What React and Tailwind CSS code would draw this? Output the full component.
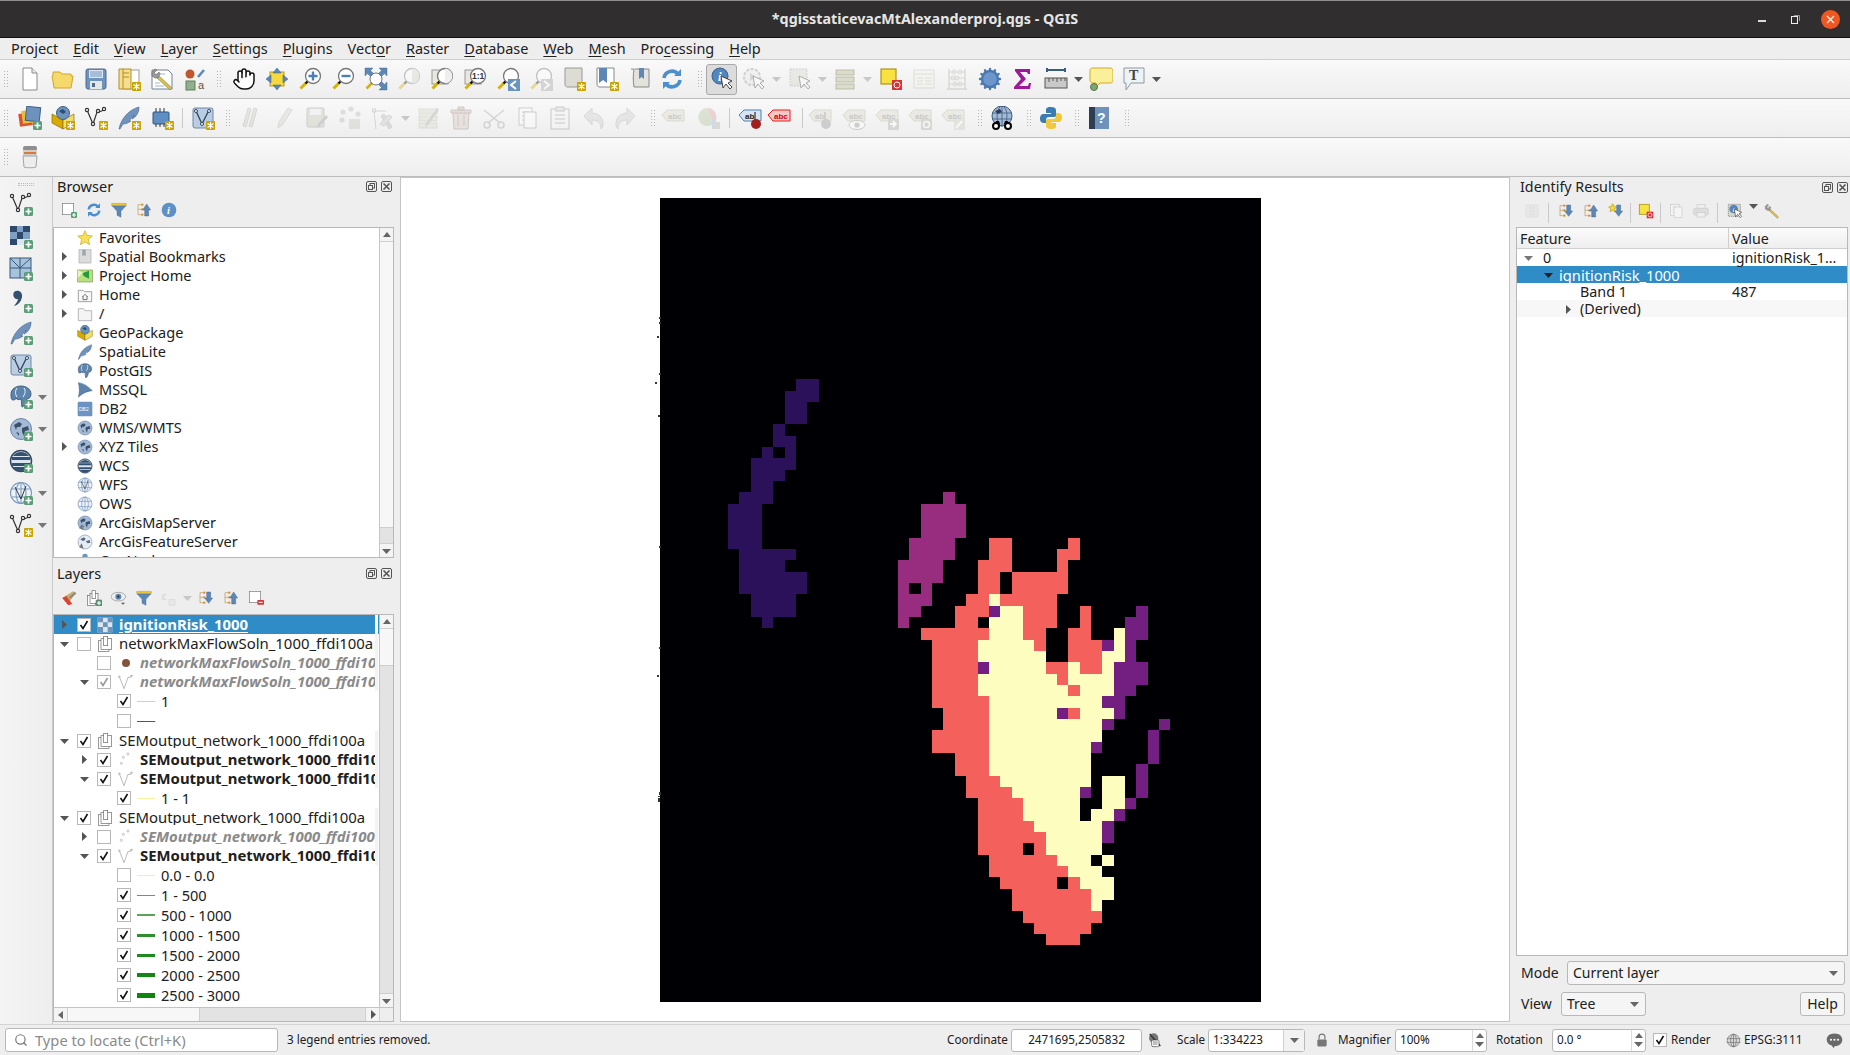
import React from 'react';
import { Hand, Search, Cog } from 'lucide-react';

// ---- small shared icon parts ----
const Star = (
  <g>
    <rect x="15" y="15" width="9" height="9" rx="1" fill="#c9a300" />
    <path d="M19.5 16v7M16.5 17.5l6 4M22.5 17.5l-6 4" stroke="#fff" strokeWidth="1.2" />
  </g>
);
const PlusB = (
  <g>
    <rect x="15" y="15" width="9" height="9" rx="1.5" fill="#5a9e78" />
    <path d="M19.5 16.5v6M16.5 19.5h6" stroke="#fff" strokeWidth="1.7" />
  </g>
);
const Vee = (
  <g fill="none" stroke="#333" strokeWidth="1.2">
    <path d="M3 4l6 14 4-12 2 0 5-2" />
    <circle cx="3" cy="4" r="1.6" fill="#fff" />
    <circle cx="9" cy="18" r="1.6" fill="#fff" />
    <circle cx="14" cy="5" r="1.6" fill="#fff" />
    <circle cx="20" cy="3" r="1.6" fill="#fff" />
  </g>
);
const VeeBox = (
  <g>
    <rect x="2" y="2" width="20" height="20" rx="2" fill="#b9cde3" stroke="#6d88a8" />
    <path d="M5 5l6 13 7-14" fill="none" stroke="#34495f" strokeWidth="1.4" />
    <circle cx="5" cy="5" r="1.5" fill="#fff" stroke="#34495f" />
    <circle cx="18" cy="5" r="1.5" fill="#fff" stroke="#34495f" />
    <circle cx="11" cy="18" r="1.5" fill="#fff" stroke="#34495f" />
  </g>
);
const Feather = (
  <path d="M2 23C4 13 11 4 22 1c0 6-3 10-7 12l2-4-5 6 2 0c-3 2-5 3-8 3l-3 5z" fill="#6f93bd" stroke="#44638a" strokeWidth=".6" />
);
const Globe = (
  <g>
    <circle cx="12" cy="12" r="10.5" fill="#a3bad6" stroke="#6c86a8" />
    <path d="M5 8l5-3 3 2-2 3-3 0-1 3zM13 11l6-2 1 4-4 1-1 5-2-4zM7 15l3 1 0 3z" fill="#3d4f66" />
  </g>
);
const GlobeDark = (
  <g>
    <circle cx="12" cy="12" r="10.5" fill="#dbe6f2" stroke="#34495f" strokeWidth="1.5" />
    <path d="M3 8h18v3H3zM3 14h18v3H3z" fill="#34516f" />
    <path d="M4 7a10 10 0 0 1 16 0zM4 18a10 10 0 0 0 16 0z" fill="#34516f" />
  </g>
);
const GlobeLine = (
  <g fill="none" stroke="#7c9abd" strokeWidth="1.1">
    <circle cx="12" cy="12" r="10.5" fill="#eef3f9" />
    <ellipse cx="12" cy="12" rx="5" ry="10.5" />
    <path d="M2 8h20M2 16h20M12 2v20" />
  </g>
);
const Pg = (
  <g>
    <path d="M2 9C2 4 7 1 12 1s10 3 10 8c0 3-2 5-4 5-1 0-1 3-2 5s-2 3-3 3c-1-2 0-5-1-8-2 1-4 1-5-1 0 1-1 2-3 2S2 12 2 9z" fill="#5d84ad" stroke="#2e4d70" strokeWidth=".8" />
    <path d="M8 3c-2 3-2 6 0 9M15 3c2 3 1 6-1 9" fill="none" stroke="#fff" strokeWidth=".9" />
  </g>
);
const mag = (inner) => (
  <g>
    <path d="M8 16L2.5 21.5" stroke="#d9b100" strokeWidth="3" />
    <path d="M10 14l-2.5 2.5" stroke="#111" strokeWidth="2.4" />
    <circle cx="15" cy="9" r="7.5" fill="#fff" stroke="#777" strokeWidth="1.3" />
    {inner}
  </g>
);
const tag = (stroke, fill, color, text) => (
  <g>
    <path d="M1 9l5-5h17v11H6z" fill={fill} stroke={stroke} />
    <text x="7" y="13" fontSize="8" fontWeight="700" fill={color} fontFamily="Liberation Sans, sans-serif">{text}</text>
  </g>
);
const Beige = (
  <g fill="#dcdccb" stroke="#b4b49c" strokeWidth=".8">
    <rect x="3" y="3" width="18" height="5" />
    <rect x="3" y="10" width="18" height="5" />
    <rect x="3" y="17" width="18" height="5" />
  </g>
);
const Cursor = <path d="M11 9l2 12 3-4 4 5 2-2-4-4 4-2z" fill="#fff" stroke="#333" strokeWidth=".9" />;
const BlueDown = <path d="M13 3h6v9h3l-6 8-6-8h3z" fill="#5d87b5" stroke="#3e6288" strokeWidth=".6" />;
const BlueUp = <path d="M13 21h6v-9h3l-6-9-6 9h3z" fill="#5d87b5" stroke="#3e6288" strokeWidth=".6" />;
const Tree = (
  <g fill="none" stroke="#b59a5a">
    <path d="M3 4h6M3 4v15M3 11h6M3 19h6" />
    <rect x="8" y="2.5" width="3" height="3" fill="#e08a2e" stroke="none" />
    <rect x="8" y="9.5" width="3" height="3" fill="#e08a2e" stroke="none" />
    <rect x="8" y="17.5" width="3" height="3" fill="#e08a2e" stroke="none" />
  </g>
);
const Table3 = (
  <g fill="none" stroke="#8a8a8a" strokeWidth=".9">
    <rect x="4" y="2" width="13" height="17" fill="#fff" />
    <path d="M7 6h7M7 10h7M7 14h7" />
    <rect x="9" y="6" width="12" height="16" fill="#fff" />
  </g>
);
const Wrench = (
  <g>
    <path d="M8 8l14 13-2 2L6 10z" fill="#d9bf55" stroke="#8a7a30" strokeWidth=".6" />
    <path d="M2 5l3-3 2 1-3 3 2 2 3-3 1 2-2 4-3 0-3-2z" fill="#9a9a9a" stroke="#666" strokeWidth=".6" />
  </g>
);

// ---- icon set ----
const G = {
  doc: <g><path d="M5 1h9l5 5v17H5z" fill="#fff" stroke="#8a8a8a" /><path d="M14 1v5h5" fill="#eee" stroke="#8a8a8a" /></g>,
  folder: <path d="M2 5h7l2 2h9v2h2l-2 12H3L1 9h1z" fill="#f6d96b" stroke="#cfa62a" />,
  save: <g><rect x="2" y="2" width="20" height="20" rx="2" fill="#6d93bd" stroke="#4a6d93" /><rect x="5" y="3" width="14" height="8" fill="#dfe7f0" /><path d="M6 5h12M6 7h12M6 9h12" stroke="#6d93bd" /><rect x="6" y="14" width="12" height="8" fill="#e6e6e6" /><rect x="8" y="16" width="3" height="4" fill="#4a6d93" /></g>,
  template: <g><rect x="8" y="3" width="14" height="19" fill="#fff" stroke="#999" /><path d="M2 2h12v20H2z" fill="#f5de8c" stroke="#b18f2a" /><path d="M6 2v20M6 6h6M6 10h6" stroke="#b18f2a" fill="none" />{Star}</g>,
  props: <g><path d="M2 3h16l4 4v15H2z" fill="#fff" stroke="#6f8096" /><path d="M5 7h10M5 16h5M5 19h9" stroke="#9fb6d2" />{Wrench}</g>,
  style: <g><circle cx="7" cy="7" r="4.5" fill="#c0562f" /><path d="M15 10L21 3" stroke="#5b8ab8" strokeWidth="2.6" /><rect x="3" y="14" width="9" height="9" fill="#8fb08a" stroke="#5f7f5f" /><text x="15" y="22" fontSize="11" fill="#555" fontFamily="Liberation Sans, sans-serif">a</text></g>,
  panto: <g><rect x="5" y="5" width="14" height="14" fill="#f5d93d" stroke="#b59a20" /><path d="M12 1l4 5h-8zM12 23l4-5h-8zM1 12l5-4v8zM23 12l-5-4v8z" fill="#5d87b5" stroke="#3e6288" strokeWidth=".5" /></g>,
  zoomin: mag(<path d="M15 4.5v9M10.5 9h9" stroke="#4a80b5" strokeWidth="2.4" />),
  zoomout: mag(<path d="M10.5 9h9" stroke="#4a80b5" strokeWidth="2.4" />),
  zoomfull: <g><path d="M10 14L2.5 21.5" stroke="#d9b100" strokeWidth="2.6" /><path d="M10 14l-2.5 2.5" stroke="#111" strokeWidth="2.4" /><circle cx="12" cy="12" r="6" fill="#fff" stroke="#777" /><path d="M1 1h8l-2.5 2.5 3 3-3 3-3-3L1 9zM23 1h-8l2.5 2.5-3 3 3 3 3-3L23 9zM23 23h-8l2.5-2.5-3-3 3-3 3 3 2.5-2.5z" fill="#5d87b5" stroke="#3e6288" strokeWidth=".4" /></g>,
  zoomlayer: mag(<path d="M15 1.5a7.5 7.5 0 0 1 0 15z" fill="#d8d8cc" />),
  zoomsel: <g><rect x="2" y="3" width="16" height="14" fill="#e8e8de" stroke="#999" />{mag(<path d="M15 1.5a7.5 7.5 0 0 1 0 15z" fill="#eee" />)}</g>,
  zoom11: <g><rect x="2" y="3" width="16" height="14" fill="#e8e8de" stroke="#999" />{mag(<text x="9" y="12" fontSize="8.5" fontWeight="700" fill="#333" fontFamily="Liberation Sans, sans-serif">1:1</text>)}</g>,
  zoomlast: <g>{mag(null)}<rect x="12" y="12" width="12" height="12" fill="#6a94c0" /><path d="M20 14l-5 4 5 4" stroke="#fff" strokeWidth="2" fill="none" /></g>,
  zoomnext: <g>{mag(null)}<rect x="12" y="12" width="12" height="12" fill="#a8a8a8" /><path d="M15 14l5 4-5 4" stroke="#fff" strokeWidth="2" fill="none" /></g>,
  booknew: <g><path d="M3 1h17v19H6c-2 0-3-1-3-3z" fill="#dcdcd4" stroke="#999" />{Star}</g>,
  bookstar: <g><path d="M2 1h17v19H5c-2 0-3-1-3-3z" fill="#fff" stroke="#888" /><path d="M4 1h8v15l-4-3-4 3z" fill="#5d87b5" />{Star}</g>,
  book: <g><path d="M2 2h3c-1 6-1 12 0 18h15V2H6" fill="#e3e3dc" stroke="#888" /><path d="M10 1h5v11l-2.5-2L10 12z" fill="#5d87b5" /></g>,
  refresh: <g fill="none" stroke="#4a8fd0" strokeWidth="3.6"><path d="M4 11a8 8 0 0 1 14-4" /><path d="M20 13a8 8 0 0 1-14 4" /><path d="M21 2v7h-7z" fill="#4a8fd0" stroke="none" /><path d="M3 22v-7h7z" fill="#4a8fd0" stroke="none" /></g>,
  identify: <g><circle cx="10" cy="9" r="8" fill="#5486be" stroke="#3e6288" /><text x="8" y="14" fontSize="13" fontWeight="700" fontStyle="italic" fill="#fff" fontFamily="Liberation Serif, serif">i</text>{Cursor}</g>,
  idselect: <g><rect x="2" y="2" width="18" height="18" fill="#d8d8cc" stroke="#777" strokeDasharray="2 1" /><circle cx="10" cy="9" r="6.5" fill="#5486be" /><text x="8.5" y="13" fontSize="10" fontWeight="700" fontStyle="italic" fill="#fff" fontFamily="Liberation Serif, serif">i</text>{Cursor}</g>,
  action: <g><circle cx="10" cy="10" r="8" fill="#e8e8e8" stroke="#999" strokeWidth="2" strokeDasharray="3 1.5" /><path d="M8 6l6 4-6 4z" fill="#aaa" />{Cursor}</g>,
  select: <g><rect x="2" y="2" width="17" height="17" fill="#d8d8cc" stroke="#999" strokeDasharray="2 1" />{Cursor}</g>,
  bars: Beige,
  panelbars: <g fill="#e4e4e4" stroke="#bbb"><rect x="3" y="3" width="18" height="18" rx="2" /><path d="M3 12h18" /><rect x="8" y="6" width="8" height="3" /><rect x="8" y="15" width="8" height="3" /></g>,
  deselect: <g><rect x="2" y="2" width="15" height="15" fill="#f7e23f" stroke="#ae9320" strokeWidth="1.2" /><rect x="13" y="13" width="10" height="10" fill="#d9333a" /><circle cx="18" cy="18" r="3" fill="none" stroke="#fff" /></g>,
  attrtable: <g><rect x="2" y="3" width="20" height="18" fill="#f3f3ed" stroke="#bcbcb0" /><path d="M2 7h20M5 11h6M13 11h7M5 14h6M13 14h7M5 17h6M13 17h7" stroke="#bcbcb0" /></g>,
  abacus: <g fill="none" stroke="#b0b0a4"><path d="M4 2v19M20 2v19M2 22h20" strokeWidth="1.4" /><path d="M4 5h16M4 11h16M4 17h16" /><circle cx="9" cy="5" r="2" /><circle cx="15" cy="5" r="2" /><circle cx="8" cy="11" r="2" /><circle cx="12" cy="11" r="2" /><circle cx="10" cy="17" r="2" /><circle cx="15" cy="17" r="2" /></g>,
  sigma: <path d="M4 2h15v5h-2l-1-2H9l6 7-7 7h9l1-3h2l-1 6H3v-2l7-8-6-8z" fill="#a0189a" />,
  ruler: <g><path d="M3 3h18M3 1v4M21 1v4" stroke="#3a5d84" strokeWidth="2" /><rect x="1" y="11" width="22" height="10" fill="#c9c9c9" stroke="#555" /><path d="M5 11v4M9 11v3M13 11v4M17 11v3M21 11v3" stroke="#555" /></g>,
  bubble: <g><path d="M3 1h18c2 0 3 1 3 3v9c0 2-1 3-3 3H11l-3 3-1-3H4c-2 0-3-1-3-3V3c0-1 1-2 2-2z" fill="#fbf09a" stroke="#d2a92a" /><circle cx="5" cy="20" r="3.5" fill="#7fa66f" stroke="#54764a" /></g>,
  textbox: <g><path d="M2 1h20v15H9l-5 7v-7H2z" fill="#eef3f5" stroke="#8c9aa0" /><text x="7" y="13" fontSize="14" fontWeight="700" fill="#444" fontFamily="Liberation Serif, serif">T</text></g>,
  layers: <g><rect x="1" y="7" width="13" height="13" fill="#d6552f" transform="rotate(-8 7 13)" /><rect x="4" y="4" width="13" height="13" fill="#e8bd3c" transform="rotate(-8 10 10)" /><rect x="8" y="1" width="14" height="14" fill="#6d93bd" stroke="#3e6288" transform="rotate(6 15 8)" />{PlusB}</g>,
  geopkg: <g><path d="M1 8l11 6v9L1 17z" fill="#d9a900" stroke="#8a6d10" strokeWidth=".7" /><path d="M23 8l-11 6v9l11-6z" fill="#f3dc68" stroke="#8a6d10" strokeWidth=".7" /><circle cx="12" cy="7" r="6.5" fill="#6d93bd" stroke="#3e6288" /><path d="M8 5l4-2 3 3-3 2z" fill="#2e4d70" /></g>,
  geopkgS: <g><path d="M1 8l11 6v9L1 17z" fill="#d9a900" stroke="#8a6d10" strokeWidth=".7" /><path d="M23 8l-11 6v9l11-6z" fill="#f3dc68" stroke="#8a6d10" strokeWidth=".7" /><circle cx="12" cy="7" r="6.5" fill="#6d93bd" stroke="#3e6288" /><path d="M8 5l4-2 3 3-3 2z" fill="#2e4d70" />{Star}</g>,
  vstar: <g>{Vee}{Star}</g>,
  vplus: <g>{Vee}{PlusB}</g>,
  fstar: <g>{Feather}{Star}</g>,
  fplus: <g>{Feather}{PlusB}</g>,
  chip: <g><rect x="3" y="6" width="16" height="12" rx="1" fill="#5f8fc2" stroke="#2f557f" /><path d="M6 2v4M10 2v4M14 2v4M6 18v3M10 18v3M14 18v3" stroke="#333" />{Star}</g>,
  vboxstar: <g>{VeeBox}{Star}</g>,
  vboxplus: <g>{VeeBox}{PlusB}</g>,
  pencils: <g fill="#cfcfc3" stroke="#999" strokeWidth=".7"><path d="M2 20l5-18 3 1-5 18zM8 20l5-18 3 1-5 18z" /></g>,
  pencil: <path d="M6 22l1-6L16 2l4 2-9 14z" fill="#d6d6ca" stroke="#999" strokeWidth=".7" />,
  savepen: <g><rect x="2" y="2" width="17" height="19" rx="1" fill="#c9c9bb" stroke="#999" /><rect x="5" y="3" width="11" height="6" fill="#eee" /><path d="M12 22l1-4 8-9 2 2-8 9z" fill="#999" /></g>,
  points: <g fill="#bbb"><circle cx="5" cy="6" r="2.6" /><circle cx="13" cy="3" r="2.6" /><circle cx="20" cy="8" r="2.6" /><circle cx="4" cy="14" r="2.6" /><rect x="11" y="13" width="11" height="10" fill="#c9c9bb" /></g>,
  digit: <g fill="none" stroke="#aaa"><path d="M3 5l2 18M3 5h12" /><rect x="1.5" y="3" width="3" height="3" /><path d="M13 8l8 13-3 2-8-13z" fill="#bbb" /><path d="M9 18l8-9 4 2-8 9z" fill="#ccc" /></g>,
  tablepen: <g>{Beige}<path d="M9 22l1-5L21 2l2 2-11 15z" fill="#aaa" /></g>,
  trash: <g><path d="M4 7h16l-1 16H5z" fill="#d9c9c0" stroke="#9a8a82" /><path d="M2 4h20v3H2zM9 1h6v3H9z" fill="#c9b9b0" stroke="#9a8a82" /><path d="M9 9v11M15 9v11" stroke="#9a8a82" /></g>,
  scissors: <g fill="none" stroke="#a8a8a8" strokeWidth="1.6"><path d="M2 4l16 13M22 4L6 17" /><circle cx="5" cy="19" r="3" /><circle cx="19" cy="19" r="3" /></g>,
  copy: Table3,
  paste: <g fill="none" stroke="#8a8a8a"><rect x="3" y="3" width="18" height="20" fill="#f4f4f4" /><rect x="8" y="1" width="8" height="4" fill="#ddd" /><path d="M7 9h10M7 13h10M7 17h10" /></g>,
  printer: <g fill="#c4c4c4" stroke="#999"><rect x="6" y="2" width="12" height="7" fill="#eee" /><rect x="1" y="8" width="22" height="10" rx="2" /><rect x="6" y="14" width="12" height="7" fill="#eee" /></g>,
  undo: <path d="M3 10l8-8v5c6 0 11 4 11 11 0 2-1 4-2 5 0-6-3-9-9-9v5z" fill="#cfcfcf" stroke="#b0b0b0" />,
  redo: <path d="M21 10l-8-8v5C7 7 2 11 2 18c0 2 1 4 2 5 0-6 3-9 9-9v5z" fill="#cfcfcf" stroke="#b0b0b0" />,
  abc: tag('#b4b49c', '#dcdccb', '#888', 'abc'),
  diagram: <g><path d="M10 2a9 9 0 1 0 6 16z" fill="#b6c7a2" /><path d="M10 2a9 9 0 0 1 6 16z" fill="#d8a59c" /><rect x="15" y="13" width="4" height="10" fill="#9fb6d2" /><rect x="19" y="16" width="4" height="7" fill="#b8b8a8" /></g>,
  abpin: <g>{tag('#4a80b5', '#d6e4f3', '#222', 'ab')}<path d="M17 6v10" stroke="#777" strokeWidth="2" /><circle cx="18" cy="18" r="5" fill="#a32020" /></g>,
  abcred: tag('#e81c1c', '#f5c8c8', '#d40000', 'abc'),
  abcpin: <g>{tag('#b4b49c', '#dcdccb', '#888', 'ab')}<path d="M17 6v10" stroke="#999" strokeWidth="2" /><circle cx="18" cy="18" r="5" fill="#999" /></g>,
  abceye: <g>{tag('#b4b49c', '#dcdccb', '#888', 'abc')}<ellipse cx="15" cy="19" rx="8" ry="4.5" fill="#fff" stroke="#999" /><circle cx="15" cy="19" r="2.6" fill="#999" /></g>,
  abcmove: <g>{tag('#b4b49c', '#dcdccb', '#888', 'abc')}<rect x="13" y="13" width="11" height="11" rx="1" fill="#b0b0a4" /><path d="M15 18h5M18 15l3 3-3 3" stroke="#fff" strokeWidth="1.8" fill="none" /></g>,
  abcrot: <g>{tag('#b4b49c', '#dcdccb', '#888', 'abc')}<rect x="13" y="13" width="11" height="11" rx="1" fill="#b0b0a4" /><circle cx="18.5" cy="18.5" r="3" fill="none" stroke="#fff" strokeWidth="1.6" /></g>,
  abcpen: <g>{tag('#b4b49c', '#dcdccb', '#888', 'abc')}<rect x="13" y="13" width="11" height="11" rx="1" fill="#cfcfc0" /><path d="M15 22l6-7" stroke="#fff" strokeWidth="2" /></g>,
  binoc: <g><circle cx="12" cy="10" r="10" fill="#a3bad6" stroke="#3d5a7d" /><path d="M2 7h20M2 13h20M12 0v20" stroke="#3d5a7d" fill="none" strokeWidth=".8" /><ellipse cx="12" cy="10" rx="5" ry="10" fill="none" stroke="#3d5a7d" strokeWidth=".8" /><path d="M5 5l5-2 2 3-4 2z" fill="#2d3e52" /><circle cx="6" cy="20" r="3" fill="#fff" stroke="#000" strokeWidth="2" /><circle cx="18" cy="20" r="3" fill="#fff" stroke="#000" strokeWidth="2" /><path d="M6 15h3l1 3h4l1-3h3l1 3H5z" fill="#000" /></g>,
  python: <g><path d="M12 1c-5 0-5 2-5 3v3h5v1H5c-3 0-4 2-4 5s2 4 4 4h2v-3c0-2 1-3 3-3h5c2 0 2-1 2-2V4c0-2-2-3-5-3z" fill="#3d7ab0" /><path d="M12 23c5 0 5-2 5-3v-3h-5v-1h7c3 0 4-2 4-5s-2-4-4-4h-2v3c0 2-1 3-3 3h-5c-2 0-2 1-2 2v5c0 2 2 3 5 3z" fill="#f2c83b" /></g>,
  help: <g><rect x="2" y="1" width="20" height="22" fill="#6d93bd" /><rect x="2" y="1" width="6" height="22" fill="#2d3e52" /><text x="10" y="17" fontSize="14" fontWeight="700" fill="#fff" fontFamily="Liberation Sans, sans-serif">?</text></g>,
  filter: <g><rect x="5" y="1" width="14" height="5" rx="2" fill="#8e8e8e" /><rect x="5" y="5" width="14" height="6" fill="#cfcfcf" /><rect x="6" y="7" width="12" height="2" fill="#d97a3a" /><path d="M5 11h14l-1 11c-2 1-10 1-12 0z" fill="#ededed" stroke="#a5a5a5" /></g>,
  rasterplus: <g><path d="M1 1h20v19H1z" fill="#dde5ee" /><path d="M1 1h7v6H1zM14 1h7v6h-7zM8 7h6v7H8zM1 14h7v6H1z" fill="#2e4a6b" /><path d="M8 1h6v6H8zM1 7h7v7H1zM14 7h7v7h-7z" fill="#7fa0c4" />{PlusB}</g>,
  meshplus: <g><rect x="1" y="1" width="21" height="20" fill="#a9c2dc" stroke="#36597f" /><path d="M11 1v20M1 11h21M1 1l10 10M22 1L11 11" stroke="#36597f" fill="none" />{PlusB}</g>,
  commaplus: <g><path d="M5 3c4-3 9 0 8 5-1 5-4 8-8 9 2-3 4-5 4-7-3 1-6-3-4-7z" fill="#34516f" />{PlusB}</g>,
  pgplus: <g>{Pg}{PlusB}</g>,
  wmsplus: <g>{Globe}{PlusB}</g>,
  wcsplus: <g>{GlobeDark}{PlusB}</g>,
  wfsplus: <g>{GlobeLine}<path d="M6 6l6 12 5-13" stroke="#333" fill="none" />{PlusB}</g>,
  newgeo: <g><rect x="2" y="2" width="17" height="17" fill="#fff" stroke="#777" />{PlusB}</g>,
  info: <g><circle cx="12" cy="12" r="11" fill="#5f90c4" /><text x="9" y="18" fontSize="16" fontStyle="italic" fontWeight="700" fill="#fff" fontFamily="Liberation Serif, serif">i</text></g>,
  funnelB: <g><path d="M1 2h22v4H1z" fill="#e8c534" stroke="#a08a20" strokeWidth=".5" /><path d="M2 6h20l-7 8v9l-6-3v-6z" fill="#5d87b5" stroke="#3e6288" strokeWidth=".5" /></g>,
  collapse: <g>{Tree}{BlueUp}</g>,
  expand: <g>{Tree}{BlueDown}</g>,
  expandstar: <g><path d="M7 1l2 4 4 1-3 3 1 4-4-2-4 2 1-4-3-3 4-1z" fill="#f3d83a" stroke="#b59a20" />{BlueDown}</g>,
  wrench: Wrench,
  brush: <g><path d="M2 12l8 10 12-18-4-2z" fill="#c9b067" /><path d="M2 12l6-3 9 12-6 2z" fill="#d9433a" /><path d="M22 4l-9 8" stroke="#888" strokeWidth="3" /></g>,
  addgroup: <g fill="#fff" stroke="#666"><rect x="2" y="8" width="12" height="15" /><rect x="6" y="5" width="12" height="15" /><rect x="9" y="1" width="5" height="12" />{PlusB}</g>,
  eye: <g><ellipse cx="11" cy="10" rx="11" ry="6.5" fill="#eee" stroke="#888" /><circle cx="11" cy="10" r="4.5" fill="#5f86b0" /><circle cx="11" cy="10" r="1.6" fill="#1e2f44" /><path d="M15 19l6 0-3 3z" fill="#555" /></g>,
  epsi: <g><text x="1" y="15" fontSize="16" fill="#aaa" fontFamily="Liberation Sans, sans-serif">ε</text><rect x="12" y="14" width="9" height="9" fill="#ddd" stroke="#bbb" /></g>,
  removeX: <g><rect x="2" y="2" width="17" height="17" fill="#fff" stroke="#777" /><rect x="14" y="15" width="10" height="7" rx="1" fill="#d9333a" /><path d="M16 18.5h6" stroke="#fff" strokeWidth="1.6" /></g>,
  // tree icons
  star: <path d="M12 1l3 7 8 1-6 5 2 8-7-4-7 4 2-8-6-5 8-1z" fill="#f6e05a" stroke="#c9a520" />,
  bookmarks: <g><path d="M3 1h18v20H3z" fill="#dcdcdc" stroke="#aaa" /><path d="M8 1h5v10l-2.5-2L8 11z" fill="#9aa4ae" /></g>,
  projhome: <g><rect x="1" y="3" width="22" height="18" fill="#b9df7f" stroke="#7e9a50" /><path d="M8 8l10-4v12l-8-4z" fill="#1f9c3c" /><path d="M1 3l8 4-8 8z" fill="#e9f4c8" /></g>,
  home: <g><path d="M2 5h7l2 2h11v15H2z" fill="#f7f7f7" stroke="#777" /><path d="M8 15l4-4 4 4M9 14v5h6v-5" fill="none" stroke="#333" /></g>,
  root: <path d="M2 4h8l2 3h10v15H2z" fill="#f4f4f4" stroke="#9a9a9a" />,
  spatialite: Feather,
  pg: Pg,
  mssql: <path d="M2 1c8 1 14 5 21 12-7 1-14 3-21 10 2-7 2-15 0-22z" fill="#5d84ad" stroke="#2e4d70" strokeWidth=".6" />,
  db2: <g><rect x="1" y="1" width="22" height="22" rx="2" fill="#6d93c2" /><text x="3" y="15" fontSize="7.5" fill="#fff" fontFamily="Liberation Sans, sans-serif">DB2</text></g>,
  wms: Globe,
  wcs: GlobeDark,
  wfs: <g>{GlobeLine}<path d="M6 6l6 12 5-13" stroke="#444" fill="none" /></g>,
  ows: GlobeLine,
  arcgis: <g>{Globe}<path d="M3 20l4-6 3 8z" fill="#777" /></g>,
  arcgisf: <g><circle cx="12" cy="12" r="10.5" fill="#e6ecf3" stroke="#7c9abd" /><path d="M5 8l5-3 3 2-2 3-3 0zM13 11l6-2 1 4-4 1z" fill="#5a6a7d" /><path d="M3 20l4-6 3 8z" fill="#777" /></g>,
  geonode: <g><circle cx="12" cy="5" r="4" fill="#6d93bd" /><circle cx="5" cy="14" r="4" fill="#6d93bd" /><circle cx="19" cy="14" r="4" fill="#6d93bd" /></g>,
  raster: <g><path d="M1 1h22v22H1z" fill="#dde5ee" /><path d="M1 1h8v7H1zM16 1h7v7h-7zM9 8h7v7H9zM1 15h8v8H1zM16 15h7v8h-7z" fill="#6d93bd" /></g>,
  group: <g fill="#fff" stroke="#666"><rect x="2" y="7" width="16" height="16" /><rect x="6" y="4" width="16" height="16" /><rect x="10" y="0.5" width="6" height="14" /></g>,
  dot: <circle cx="12" cy="12" r="6" fill="#84543a" />,
  vee: <g fill="none" stroke="#999" strokeWidth="1"><path d="M2 4l7 18 6-17 4 0 3-3" /><circle cx="2" cy="4" r="1.2" fill="#fff" /><circle cx="20" cy="3" r="1.2" fill="#fff" /></g>,
  pts: <g fill="#fff" stroke="#aaa"><circle cx="15" cy="3" r="1.6" /><circle cx="8" cy="8" r="1.6" /><circle cx="5" cy="17" r="1.6" /></g>,
  lockcrs: <g><circle cx="10" cy="9" r="7" fill="#777" /><path d="M4 3l16 18" stroke="#333" strokeWidth="2" /><rect x="7" y="12" width="11" height="10" rx="2" fill="#fff" stroke="#444" /><path d="M9 15h7M9 18h7" stroke="#444" /></g>,
  lock: <g><path d="M7 11V7a5 5 0 0 1 10 0v4" fill="none" stroke="#777" strokeWidth="2" /><rect x="4" y="11" width="16" height="12" rx="2" fill="#777" /></g>,
  crs: <g fill="none" stroke="#666"><circle cx="12" cy="12" r="10" fill="#d9d9d9" /><ellipse cx="12" cy="12" rx="4.5" ry="10" /><path d="M1 9h22M1 15h22M12 2v20" /></g>,
  msg: <g><path d="M12 2c7 0 11 4 11 9s-4 9-11 9l-1 3-3-4c-4-1-7-4-7-8 0-5 4-9 11-9z" fill="#6a6a6a" /><circle cx="7" cy="11" r="1.5" fill="#fff" /><circle cx="12" cy="11" r="1.5" fill="#fff" /><circle cx="17" cy="11" r="1.5" fill="#fff" /></g>,
};

const Ico = ({ n, s = 24, off = false }) => {
  const look = off ? 'shrink-0 opacity-40' : 'shrink-0';
  if (n === 'hand') return <Hand size={s} fill="#fff" stroke="#111" strokeWidth={1.5} className={look} />;
  if (n === 'cog') return <Cog size={s} fill="#6d97cc" stroke="#4a78b0" strokeWidth={2.4} className={look} />;
  return <svg width={s} height={s} viewBox="0 0 24 24" className={look}>{G[n]}</svg>;
};

const TriR = () => <svg width="6" height="9" viewBox="0 0 6 9"><path d="M1 0l5 4.5L1 9z" fill="#555" /></svg>;
const TriD = ({ c = '#555' }) => <svg width="9" height="6" viewBox="0 0 9 6"><path d="M0 1h9L4.5 6z" fill={c} /></svg>;

const Grip = () => (
  <svg width="5" height="17" viewBox="0 0 5 17">
    {[1, 4, 7, 10, 13, 16].map((y) => (
      <g key={y} fill="#b5b5b5"><rect x="0" y={y - 1} width="1" height="1" /><rect x="3" y={y - 1} width="1" height="1" /></g>
    ))}
  </svg>
);

const WIDTHS = {
  1: 'w-[1px]', 2: 'w-[2px]', 3: 'w-[3px]', 4: 'w-[4px]', 5: 'w-[5px]', 6: 'w-[6px]', 7: 'w-[7px]', 8: 'w-[8px]', 9: 'w-[9px]',
  12: 'w-[12px]', 13: 'w-[13px]', 14: 'w-[14px]', 16: 'w-[16px]', 20: 'w-[20px]', 24: 'w-[24px]', 25: 'w-[25px]', 26: 'w-[26px]', 28: 'w-[28px]', 30: 'w-[30px]', 31: 'w-[31px]', 33: 'w-[33px]',
};

// items: "name", "name!" (disabled), "name/28" (slot width), ":" grip, "|" separator, "v" menu arrow, "_5" spacer
const Bar = ({ items, size = 24, slot = 33 }) => (
  <>
    {items.map((raw, i) => {
      if (raw.startsWith('_')) return <div key={i} className={`shrink-0 ${WIDTHS[raw.slice(1)]}`} />;
      const [name, w] = raw.split('/');
      const width = WIDTHS[w || (name === ':' ? 16 : name === '|' ? 8 : name === 'v' || name === 'v!' ? 12 : slot)];
      if (name === ':') return <div key={i} className={`shrink-0 flex justify-center ${width}`}><Grip /></div>;
      if (name === '|') return <div key={i} className={`shrink-0 flex justify-center ${width}`}><div className="w-px h-[20px] bg-[#c9c9c9]" /></div>;
      if (name === 'v' || name === 'v!') return <div key={i} className={`shrink-0 flex justify-center ${width}`}><TriD c={name === 'v' ? '#555' : '#c8c8c8'} /></div>;
      const off = name.endsWith('!');
      const n = off ? name.slice(0, -1) : name;
      if (n === 'identify') {
        return (
          <div key={i} className={`shrink-0 flex items-center justify-center h-[31px] bg-[#dcdcdc] border border-[#a9a9a9] rounded-[3px] ${width}`}>
            <Ico n={n} s={size} />
          </div>
        );
      }
      return <div key={i} className={`shrink-0 flex justify-center ${width}`}><Ico n={n} s={size} off={off} /></div>;
    })}
  </>
);

const TB1 = [':/13', 'doc', 'folder', 'save', 'template', 'props', 'style', ':', 'hand', 'panto', 'zoomin', 'zoomout', 'zoomfull', 'zoomlayer!', 'zoomsel', 'zoom11', 'zoomlast', 'zoomnext!', 'booknew', 'bookstar', '_3', 'book/30', 'refresh/31', '_7', ':/12', 'identify/31', 'action!', 'v!', '_1', 'select!', 'v!', 'bars', 'v!', '_1', 'deselect', 'attrtable!', 'abacus!', 'cog', 'sigma', 'ruler', 'v', 'bubble', 'textbox', 'v'];
const TB2 = [':/13', 'layers', 'geopkgS', 'vstar', 'fstar', 'chip', '|', 'vboxstar', '_1', ':', '_3', 'pencils!/28', 'pencil!', 'savepen!', 'points!', 'digit!', 'v!', 'tablepen!', 'trash!', 'scissors!', 'copy!', 'paste!', 'undo!', 'redo!', '_3', ':', 'abc!/24', '_7', 'diagram!', '|', 'abpin', 'abcred/26', '|/20', 'abcpin!/16', '_9', 'abceye!', 'abcmove!', 'abcrot!', 'abcpen!', '_3', ':', 'binoc/28', '_5', ':', 'python/28', '_4', ':', 'help/28', '_6', ':'];

const MENUS = [
  ['Pro', 'j', 'ect'], ['', 'E', 'dit'], ['', 'V', 'iew'], ['', 'L', 'ayer'], ['', 'S', 'ettings'], ['', 'P', 'lugins'],
  ['Vect', 'o', 'r'], ['', 'R', 'aster'], ['', 'D', 'atabase'], ['', 'W', 'eb'], ['', 'M', 'esh'], ['Pro', 'c', 'essing'], ['', 'H', 'elp'],
];

const ToolRow = ({ children }) => (
  <div className="h-[39px] shrink-0 flex items-center border-b border-[#bdbdbd] bg-gradient-to-b from-[#f9f9f9] to-[#eeeeee]">{children}</div>
);

const DockBtns = () => (
  <div className="flex items-center gap-[4px] ml-auto">
    <svg width="11" height="11" viewBox="0 0 11 11" fill="none" stroke="#555"><rect x=".5" y=".5" width="10" height="10" rx="1.5" /><rect x="4" y="2.5" width="4.5" height="4.5" /><rect x="2.5" y="4.5" width="4" height="4" fill="#eee" /></svg>
    <svg width="11" height="11" viewBox="0 0 11 11" fill="none" stroke="#555"><rect x=".5" y=".5" width="10" height="10" rx="1.5" /><path d="M2.5 2.5l6 6M8.5 2.5l-6 6" strokeWidth="1.6" /></svg>
  </div>
);

const ScrollV = ({ thumb }) => (
  <div className="w-[14px] shrink-0 flex flex-col border-l border-[#c4c4c4] bg-[#e3e3e3]">
    <div className="h-[14px] shrink-0 flex items-center justify-center bg-[#f4f4f4] border-b border-[#cfcfcf]"><svg width="8" height="5" viewBox="0 0 8 5"><path d="M4 0l4 5H0z" fill="#666" /></svg></div>
    <div className={thumb} />
    <div className="flex-1" />
    <div className="h-[14px] shrink-0 flex items-center justify-center bg-[#f4f4f4] border-t border-[#cfcfcf]"><TriD c="#666" /></div>
  </div>
);

const BROWSER = [
  ['star', 'Favorites', 0], ['bookmarks', 'Spatial Bookmarks', 1], ['projhome', 'Project Home', 1], ['home', 'Home', 1], ['root', '/', 1],
  ['geopkg', 'GeoPackage', 0], ['spatialite', 'SpatiaLite', 0], ['pg', 'PostGIS', 0], ['mssql', 'MSSQL', 0], ['db2', 'DB2', 0],
  ['wms', 'WMS/WMTS', 0], ['wms', 'XYZ Tiles', 1], ['wcs', 'WCS', 0], ['wfs', 'WFS', 0], ['ows', 'OWS', 0], ['arcgis', 'ArcGisMapServer', 0], ['arcgisf', 'ArcGisFeatureServer', 0], ['geonode', 'GeoNode', 0],
];

const Check = ({ on, dim }) => (
  <div className="w-[14px] h-[14px] shrink-0 border border-[#b8b8b8] bg-white flex items-center justify-center">
    {on && <svg width="10" height="10" viewBox="0 0 10 10"><path d="M1.5 5l2.5 3.5L8.5 1" fill="none" stroke={dim ? '#999' : '#111'} strokeWidth="1.6" /></svg>}
  </div>
);

// one tree row of the layers panel
const LayerRow = ({ level, arrow, on, dim, icon, text, cls }) => (
  <div className="h-[19px] flex items-center overflow-hidden text-[14.9px]">
    <div className={level ? 'w-[36px] pl-[24px] shrink-0 flex justify-center' : 'w-[16px] pl-[4px] shrink-0 flex justify-center'}>
      {arrow === 'r' && <TriR />}
      {arrow === 'd' && <TriD />}
    </div>
    <div className="w-[7px] shrink-0" />
    <Check on={on} dim={dim} />
    <div className={level ? 'w-[29px] shrink-0 flex justify-center' : 'w-[28px] shrink-0 flex justify-center'}>
      <Ico n={icon} s={16} />
    </div>
    <div className={`${level ? 'w-[235px]' : 'w-[256px]'} shrink-0 overflow-hidden whitespace-nowrap ${cls}`}>{text}</div>
    <div className="ml-auto mr-[1px] w-[3px] h-full bg-[#f3f3f3]" />
  </div>
);

const Legend = ({ on, line, text }) => (
  <div className="h-[20px] flex items-center pl-[63px] text-[14.6px]">
    <Check on={on} />
    <div className="w-[18px] ml-[6px] shrink-0 flex items-center"><div className={`w-full ${line}`} /></div>
    <div className="ml-[6px] text-[#202020]">{text}</div>
  </div>
);

// raster cells as [row, firstCol, lastCol]
const RASTER = {
  '#2a1159': [[16, 12, 13], [17, 11, 13], [18, 11, 12], [19, 11, 12], [20, 10, 10], [21, 10, 11], [22, 9, 9], [22, 11, 11], [23, 8, 11], [24, 8, 10], [25, 8, 9], [26, 7, 9], [27, 6, 8], [28, 6, 8], [29, 6, 8], [30, 6, 8], [31, 7, 11], [32, 7, 10], [33, 7, 12], [34, 7, 12], [35, 8, 11], [36, 8, 11], [37, 9, 9]],
  '#982d80': [[26, 25, 25], [27, 23, 26], [28, 23, 26], [29, 23, 26], [30, 22, 25], [31, 22, 25], [32, 21, 24], [33, 21, 24], [34, 21, 21], [34, 23, 23], [35, 21, 23], [36, 21, 22], [37, 21, 21]],
  '#f4615c': [[30, 29, 30], [30, 36, 36], [31, 29, 30], [31, 35, 36], [32, 28, 30], [32, 35, 35], [33, 28, 29], [33, 31, 35], [34, 28, 29], [34, 31, 35], [35, 27, 28], [35, 30, 34], [36, 26, 28], [36, 32, 34], [36, 37, 37], [37, 26, 27], [37, 32, 34], [37, 37, 37], [38, 23, 28], [38, 32, 33], [38, 36, 37], [39, 24, 27], [39, 33, 33], [39, 36, 38], [40, 24, 27], [40, 36, 38], [41, 24, 27], [41, 34, 35], [41, 37, 38], [42, 24, 27], [42, 35, 35], [43, 24, 27], [43, 36, 36], [44, 24, 28], [45, 25, 28], [45, 36, 36], [46, 25, 28], [47, 24, 28], [48, 24, 28], [49, 26, 28], [50, 26, 28], [51, 27, 29], [52, 27, 30], [53, 28, 31], [54, 28, 31], [55, 28, 32], [56, 28, 33], [57, 28, 31], [57, 33, 33], [58, 29, 34], [59, 29, 35], [60, 30, 34], [60, 36, 36], [61, 31, 37], [62, 31, 37], [63, 32, 38], [64, 33, 37], [65, 34, 36]],
  '#fcfdbf': [[35, 29, 29], [36, 30, 31], [37, 29, 31], [38, 29, 31], [38, 40, 40], [39, 28, 32], [39, 40, 40], [40, 28, 33], [40, 39, 40], [41, 29, 33], [41, 36, 36], [41, 39, 39], [42, 28, 34], [42, 36, 39], [43, 28, 35], [43, 37, 39], [44, 29, 38], [45, 29, 34], [45, 37, 39], [46, 29, 38], [47, 29, 38], [48, 29, 37], [49, 29, 37], [50, 29, 37], [51, 30, 37], [51, 39, 40], [52, 31, 36], [52, 39, 40], [53, 32, 36], [53, 39, 40], [54, 32, 36], [54, 38, 39], [55, 33, 38], [56, 34, 38], [57, 34, 38], [58, 35, 37], [58, 39, 39], [59, 36, 38], [60, 37, 39], [61, 38, 39], [62, 38, 38]],
  '#721f81': [[36, 29, 29], [36, 42, 42], [37, 41, 42], [38, 41, 42], [39, 39, 39], [39, 41, 41], [40, 41, 41], [41, 28, 28], [41, 40, 42], [42, 40, 42], [43, 40, 41], [44, 39, 40], [45, 35, 35], [45, 40, 40], [46, 39, 39], [46, 44, 44], [47, 43, 43], [48, 38, 38], [48, 43, 43], [49, 43, 43], [50, 42, 42], [51, 42, 42], [52, 37, 37], [52, 42, 42], [53, 41, 41], [54, 40, 40], [55, 39, 39], [56, 39, 39]],
};
const CW = 601 / 53;
const CH = 804 / 71;
const TICKS = [[5, 119, 2, 2], [5, 124, 2, 2], [3, 138, 2, 2], [5, 175, 2, 2], [1, 184, 2, 2], [4, 217, 2, 2], [5, 348, 2, 2], [5, 449, 2, 2], [3, 477, 2, 2], [5, 594, 2, 3], [4, 598, 2, 1], [4, 600, 2, 4]];

const MapRaster = () => (
  <svg width="607" height="804" viewBox="0 0 607 804" shapeRendering="crispEdges">
    <rect x="6" y="0" width="601" height="804" fill="#000004" />
    {TICKS.map(([x, y, w, h], i) => <rect key={i} x={x} y={y} width={w} height={h} fill="#2a3a30" />)}
    {Object.entries(RASTER).map(([color, cells]) =>
      cells.map(([r, a, b]) => (
        <rect key={color + r + a} x={6 + a * CW} y={r * CH} width={(b - a + 1) * CW} height={CH} fill={color} />
      ))
    )}
  </svg>
);

const Spin = () => (
  <div className="w-[14px] h-full flex flex-col items-center justify-center gap-[3px] border-l border-[#dcdcdc]">
    <svg width="8" height="5" viewBox="0 0 8 5"><path d="M4 0l4 5H0z" fill="#666" /></svg>
    <TriD c="#666" />
  </div>
);

const Combo = ({ children, cls }) => (
  <div className={`h-[24px] flex items-center justify-between pl-[5px] pr-[6px] bg-[#f5f5f5] border border-[#b8b8b8] rounded-[3px] ${cls}`}>
    <span>{children}</span>
    <TriD c="#666" />
  </div>
);

export default function App() {
  return (
    <div className="w-[1850px] h-[1055px] overflow-hidden flex flex-col bg-[#eeeeee] text-[14px] leading-none text-[#202020] font-['Noto_Sans','Open_Sans',sans-serif]">
      {/* title bar */}
      <div className="relative h-[38px] shrink-0 flex items-center justify-center bg-[#302e2e] border-t border-[#8f8f8f] border-b-[#111] border-b text-[14.3px] font-bold text-[#e6e6e6]">
        <span>*qgisstaticevacMtAlexanderproj.qgs - QGIS</span>
        <div className="absolute right-[10px] top-0 h-full flex items-center">
          <div className="w-[8px] h-[1.5px] mt-[4px] mr-[25px] bg-[#dddddd]" />
          <svg width="9" height="10" viewBox="0 0 9 10" className="mr-[21px]" fill="none"><path d="M3 1.5h5.5V7" stroke="#999" /><rect x=".5" y="2.5" width="6" height="7" stroke="#eee" /></svg>
          <div className="w-[19px] h-[19px] rounded-full bg-[#ee5622] flex items-center justify-center">
            <svg width="9" height="9" viewBox="0 0 9 9"><path d="M1 1l7 7M8 1L1 8" stroke="#fff" strokeWidth="1.2" /></svg>
          </div>
        </div>
      </div>

      {/* menu bar */}
      <div className="h-[22px] shrink-0 flex items-center pl-[11px] pt-[2px] gap-[15px] border-b border-[#cfcfcf] bg-[#eeeeee] text-[14.45px]">
        {MENUS.map(([a, u, b], i) => (
          <span key={i} className="whitespace-pre">{a}<span className="underline underline-offset-2">{u}</span>{b}</span>
        ))}
      </div>

      {/* tool bars */}
      <ToolRow><Bar items={TB1} /></ToolRow>
      <ToolRow><Bar items={TB2} /></ToolRow>
      <ToolRow><Bar items={[':/13', 'filter']} /></ToolRow>

      {/* main area */}
      <div className="flex-1 min-h-0 flex">
        {/* left vertical tool bar */}
        <div className="w-[53px] shrink-0 flex flex-col border-r border-[#c9c9c9] bg-gradient-to-r from-[#f4f4f4] to-[#eeeeee]">
          <div className="h-[14px] flex items-center justify-center"><div className="w-[16px] h-[3px] border-y border-dotted border-[#bbbbbb]" /></div>
          <div className="flex flex-col gap-[8px] pl-[9px]">
            {[['vplus'], ['rasterplus'], ['meshplus'], ['commaplus'], ['fplus'], ['vboxplus'], ['pgplus', 1], ['wmsplus', 1], ['wcsplus'], ['wfsplus', 1], ['vstar', 1]].map(([n, arrow], i) => (
              <div key={i} className={i < 2 ? 'h-[25px] flex items-center' : 'h-[24px] flex items-center'}>
                <Ico n={n} s={24} />
                {arrow && <div className="ml-[5px]"><TriD c="#777" /></div>}
              </div>
            ))}
          </div>
        </div>

        {/* left docks */}
        <div className="w-[341px] shrink-0 flex flex-col pb-[2px] text-[14.5px]">
          <div className="h-[50px] shrink-0 flex flex-col">
            <div className="h-[18px] shrink-0 flex items-center pl-[4px] pr-[2px]">
              <span>Browser</span>
              <DockBtns />
            </div>
            <div className="h-[30px] shrink-0 flex items-center pl-[3px]"><Bar items={['newgeo', 'refresh', 'funnelB', 'collapse', 'info']} size={16} slot={25} /></div>
          </div>
          <div className="h-[331px] shrink-0 flex border border-[#b8b8b8] bg-white">
            <div className="flex-1 min-w-0 overflow-hidden">
              {BROWSER.map(([ic, label, arrow]) => (
                <div key={label} className="h-[19px] flex items-center">
                  <div className="w-[20px] flex justify-center shrink-0">{arrow ? <TriR /> : null}</div>
                  <div className="w-[22px] flex justify-center shrink-0"><Ico n={ic} s={16} /></div>
                  <span className="ml-[3px] whitespace-nowrap">{label}</span>
                </div>
              ))}
            </div>
            <ScrollV thumb="h-[286px] bg-[#f7f7f7] border-b border-[#cfcfcf]" />
          </div>

          <div className="h-[28px] shrink-0 flex items-center pl-[4px] pr-[2px] pt-[3px]">
            <span>Layers</span>
            <DockBtns />
          </div>
          <div className="h-[28px] shrink-0 flex items-center pl-[3px] pb-[4px]">
            <Bar items={['brush', 'addgroup', 'eye', 'funnelB', 'epsi!', 'v!/12', 'expand', 'collapse', 'removeX']} size={16} slot={25} />
          </div>
          <div className="flex-1 min-h-0 flex flex-col border border-[#b8b8b8] bg-white">
            <div className="flex-1 min-h-0 flex">
              <div className="flex-1 min-w-0 overflow-hidden">
                <div className="h-[19px] bg-[#308cc6] flex items-center text-[14.9px]">
                  <div className="w-[16px] pl-[4px] shrink-0 flex justify-center"><TriR /></div>
                  <div className="w-[7px] shrink-0" />
                  <Check on />
                  <div className="w-[28px] shrink-0 flex justify-center"><Ico n="raster" s={16} /></div>
                  <span className="font-bold text-white underline underline-offset-2">ignitionRisk_1000</span>
                  <div className="ml-auto mr-[1px] w-[3px] h-full bg-white" />
                </div>
                <LayerRow level={0} arrow="d" icon="group" text="networkMaxFlowSoln_1000_ffdi100a" />
                <LayerRow level={1} icon="dot" text="networkMaxFlowSoln_1000_ffdi100a" cls="font-bold italic text-[#8a8a8a]" />
                <LayerRow level={1} arrow="d" on dim icon="vee" text="networkMaxFlowSoln_1000_ffdi100a" cls="font-bold italic text-[#8a8a8a]" />
                <Legend on line="h-px bg-[#f2e21e]" text="1" />
                <Legend line="h-px bg-[#e31a1c]" text="" />
                <LayerRow level={0} arrow="d" on icon="group" text="SEMoutput_network_1000_ffdi100a" />
                <LayerRow level={1} arrow="r" on icon="pts" text="SEMoutput_network_1000_ffdi100a" cls="font-bold" />
                <LayerRow level={1} arrow="d" on icon="vee" text="SEMoutput_network_1000_ffdi100a" cls="font-bold" />
                <Legend on line="h-px bg-[#f9f39f]" text="1 - 1" />
                <LayerRow level={0} arrow="d" on icon="group" text="SEMoutput_network_1000_ffdi100a" />
                <LayerRow level={1} arrow="r" icon="pts" text="SEMoutput_network_1000_ffdi100a" cls="font-bold italic text-[#8a8a8a]" />
                <LayerRow level={1} arrow="d" on icon="vee" text="SEMoutput_network_1000_ffdi100a" cls="font-bold" />
                <Legend line="h-px bg-[#f5e6d3]" text="0.0 - 0.0" />
                <Legend on line="h-px bg-[#5f9f5f]" text="1 - 500" />
                <Legend on line="h-[2px] bg-[#58a558]" text="500 - 1000" />
                <Legend on line="h-[3px] bg-[#2f8f2f]" text="1000 - 1500" />
                <Legend on line="h-[3px] bg-[#1f8a1f]" text="1500 - 2000" />
                <Legend on line="h-[4px] bg-[#158615]" text="2000 - 2500" />
                <Legend on line="h-[5px] bg-[#108410]" text="2500 - 3000" />
              </div>
              <ScrollV thumb="h-[37px] bg-[#f7f7f7] border-b border-[#cfcfcf]" />
            </div>
            <div className="h-[14px] shrink-0 flex border-t border-[#c4c4c4] bg-[#e3e3e3]">
              <div className="w-[14px] flex items-center justify-center bg-[#f4f4f4] border-r border-[#cfcfcf]"><svg width="5" height="8" viewBox="0 0 5 8"><path d="M5 0v8L0 4z" fill="#666" /></svg></div>
              <div className="w-[132px] bg-[#f7f7f7] border-r border-[#cfcfcf]" />
              <div className="flex-1" />
              <div className="w-[14px] flex items-center justify-center bg-[#f4f4f4] border-l border-[#cfcfcf]"><TriR /></div>
              <div className="w-[14px] bg-[#eeeeee] border-l border-[#cfcfcf]" />
            </div>
          </div>
        </div>

        {/* map canvas */}
        <div className="w-[1110px] ml-[6px] shrink-0 mb-[2px] border border-[#c4c4c4] bg-white pl-[253px] pt-[20px]">
          <MapRaster />
        </div>

        {/* identify results */}
        <div className="flex-1 min-w-0 flex flex-col ml-[6px] pb-[39px]">
          <div className="h-[18px] shrink-0 flex items-center pl-[4px] pr-[2px] pt-[2px] text-[14.3px]">
            <span>Identify Results</span>
            <DockBtns />
          </div>
          <div className="h-[32px] shrink-0 flex items-start pt-[8px] pl-[3px]">
            <Bar items={['panelbars!/25', '|/9', 'expand/25', 'collapse/25', 'expandstar/25', '|/5', 'deselect/25', '|/5', 'copy!/25', 'printer!/25', '|/9', 'idselect/25', 'v/12', 'wrench/25']} size={16} slot={25} />
          </div>
          <div className="h-[729px] shrink-0 mr-[2px] border border-[#b8b8b8] bg-white text-[14.3px]">
            <div className="h-[21px] flex items-center bg-gradient-to-b from-[#fbfbfb] to-[#eeeeee] border-b border-[#cfcfcf]">
              <div className="w-[212px] pl-[3px] pt-[2px] border-r border-[#cfcfcf] h-full flex items-center">Feature</div>
              <div className="pl-[3px] pt-[2px]">Value</div>
            </div>
            <div className="h-[17px] flex items-center pt-[2px]">
              <div className="w-[212px] flex items-center pl-[7px]"><TriD c="#777" /><span className="ml-[10px]">0</span></div>
              <span className="pl-[3px] whitespace-nowrap">ignitionRisk_1...</span>
            </div>
            <div className="h-[17px] flex items-center bg-[#308cc6] text-white pl-[27px] pt-[1px]"><TriD c="#222" /><span className="ml-[6px] text-[14.7px]">ignitionRisk_1000</span></div>
            <div className="h-[17px] flex items-center pt-[2px]">
              <div className="w-[212px] pl-[63px]">Band 1</div>
              <span className="pl-[3px]">487</span>
            </div>
            <div className="h-[17px] flex items-center bg-[#f7f7f7] pl-[48px] pt-[2px]"><TriR /><span className="ml-[9px]">(Derived)</span></div>
          </div>
          <div className="flex items-center h-[24px] mt-[5px] pl-[5px] pr-[5px]">
            <span className="w-[46px]">Mode</span>
            <Combo cls="flex-1">Current layer</Combo>
          </div>
          <div className="flex items-center h-[24px] mt-[7px] pl-[5px] pr-[5px]">
            <span className="w-[40px]">View</span>
            <Combo cls="w-[85px]">Tree</Combo>
            <div className="ml-auto w-[45px] h-[24px] flex items-center justify-center border border-[#b8b8b8] rounded-[3px] bg-[#f5f5f5]">Help</div>
          </div>
        </div>
      </div>

      {/* status bar */}
      <div className="h-[31px] shrink-0 flex items-center border-t border-[#d4d4d4] text-[11.7px] whitespace-nowrap">
        <div className="ml-[5px] w-[273px] h-[24px] shrink-0 flex items-center bg-white border border-[#b8b8b8] rounded-[3px] text-[14.7px] text-[#8a8a8a]">
          <Search size={14} className="ml-[8px] mr-[7px] text-[#777]" />
          <span>Type to locate (Ctrl+K)</span>
        </div>
        <span className="ml-[9px]">3 legend entries removed.</span>
        <div className="ml-auto w-[903px] shrink-0 flex items-center">
          <span className="w-[64px]">Coordinate</span>
          <div className="w-[131px] h-[23px] flex items-center justify-center bg-white border border-[#b8b8b8] rounded-[3px]">2471695,2505832</div>
          <div className="w-[26px] flex justify-center"><Ico n="lockcrs" s={16} /></div>
          <span className="ml-[9px] w-[31px]">Scale</span>
          <div className="w-[97px] h-[23px] flex items-center bg-white border border-[#b8b8b8] rounded-[3px] pl-[4px]">
            <span>1:334223</span>
            <div className="ml-auto w-[21px] h-full flex items-center justify-center bg-[#f2f2f2] border-l border-[#cfcfcf]"><TriD c="#666" /></div>
          </div>
          <div className="w-[33px] flex justify-center"><Ico n="lock" s={14} /></div>
          <span className="w-[57px]">Magnifier</span>
          <div className="w-[92px] h-[23px] flex items-center bg-white border border-[#b8b8b8] rounded-[3px] pl-[4px]">
            <span>100%</span>
            <div className="ml-auto h-full"><Spin /></div>
          </div>
          <span className="ml-[9px] w-[56px]">Rotation</span>
          <div className="w-[94px] h-[23px] flex items-center bg-white border border-[#b8b8b8] rounded-[3px] pl-[4px]">
            <span>0.0 °</span>
            <div className="ml-auto h-full"><Spin /></div>
          </div>
          <div className="ml-[7px]"><Check on /></div>
          <span className="ml-[4px] w-[55px]">Render</span>
          <Ico n="crs" s={15} />
          <span className="ml-[3px] w-[80px]">EPSG:3111</span>
          <div className="w-[20px] flex justify-center"><Ico n="msg" s={17} /></div>
        </div>
      </div>
    </div>
  );
}
